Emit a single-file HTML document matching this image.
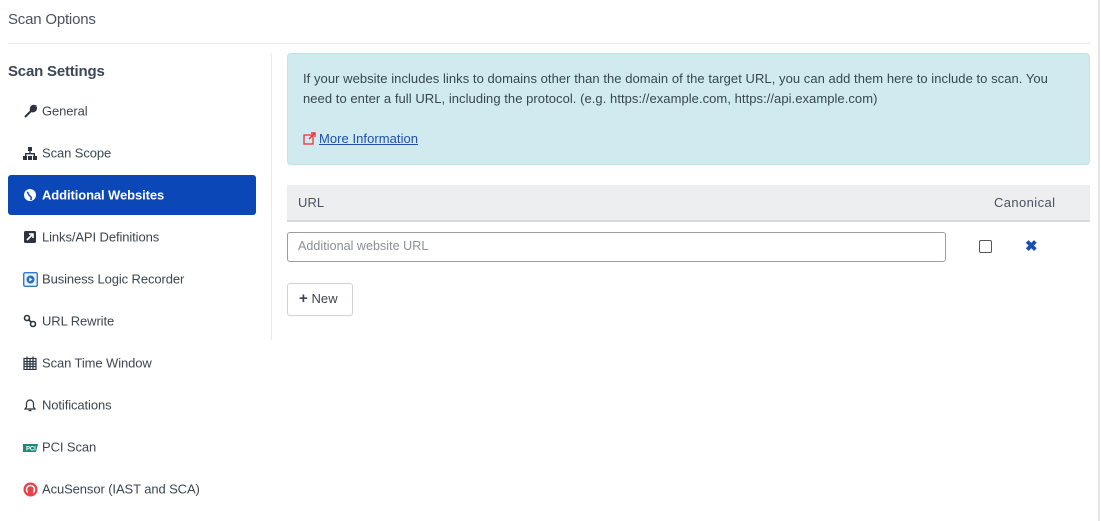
<!DOCTYPE html>
<html><head><meta charset="utf-8"><style>
body{margin:0;width:1101px;height:521px;background:#fff;font-family:"Liberation Sans",sans-serif;color:#3d4650;position:relative;overflow:hidden}
.abs{position:absolute}
.t{font-size:13px;letter-spacing:0.05px;white-space:nowrap}
.nav{position:absolute;left:8px;width:248px;height:40px;font-size:13px;letter-spacing:-0.1px;color:#3d4650}
.nav span{position:absolute;left:34px;top:50%;transform:translateY(-50%)}
.nav svg{position:absolute;left:15px;top:13px}
</style></head><body>
<div class="abs" style="left:1098px;top:0;width:2px;height:521px;background:#e4e6e9"></div>
<div class="abs" style="left:8px;top:11px;font-size:15px;letter-spacing:-0.2px;color:#4a5260">Scan Options</div>
<div class="abs" style="left:8px;top:43px;width:1082px;height:1px;background:#e5e7ea"></div>
<div class="abs" style="left:8px;top:63px;font-size:15px;font-weight:bold;letter-spacing:-0.2px;color:#3e4757">Scan Settings</div>
<div class="abs" style="left:271px;top:53px;width:1px;height:287px;background:#e8e9eb"></div>

<div class="nav" style="top:91px"><svg width="14" height="14" viewBox="0 0 14 14"><path d="M2 13L8 7M8 7C7 4 9 1 12 2L10 4L11 5L13 4C13 7 10 8 8 7" stroke="#2d3440" stroke-width="2" fill="#2d3440"/></svg><span>General</span></div>
<div class="nav" style="top:133px"><svg width="14" height="14" viewBox="0 0 14 14" fill="#2d3440"><rect x="5" y="1" width="4" height="4"/><rect x="6.3" y="5" width="1.4" height="3"/><rect x="2" y="7" width="10" height="1.4"/><rect x="2" y="7" width="1.4" height="3"/><rect x="10.6" y="7" width="1.4" height="3"/><rect x="0" y="10" width="4" height="4"/><rect x="5" y="10" width="4" height="4"/><rect x="10" y="10" width="4" height="4"/></svg><span>Scan Scope</span></div>
<div class="nav" style="top:175px;background:#0c47b8;border-radius:3px"><svg width="14" height="14" viewBox="0 0 14 14"><circle cx="7" cy="7" r="6" fill="#fff"/><path d="M4 4C6 5 5 7 7 8C9 9 8 11 8 12" stroke="#0c47b8" stroke-width="1.5" fill="none"/></svg><span style="color:#fff;font-weight:bold">Additional Websites</span></div>
<div class="nav" style="top:217px"><svg width="14" height="14" viewBox="0 0 14 14"><rect x="1" y="1" width="12" height="12" rx="1.5" fill="#2d3440"/><path d="M4 10L10 4M6 4H10V8" stroke="#fff" stroke-width="1.6" fill="none"/></svg><span>Links/API Definitions</span></div>
<div class="nav" style="top:259px"><svg width="15" height="15" viewBox="0 0 15 15"><rect x="0.7" y="0.7" width="13.6" height="13.6" rx="1.5" fill="#eaf1fa" stroke="#2a7ccf" stroke-width="1.4"/><circle cx="7.5" cy="7.5" r="4" fill="#2a6fb8"/><path d="M6.3 5.5L9.5 7.5L6.3 9.5Z" fill="#fff"/></svg><span>Business Logic Recorder</span></div>
<div class="nav" style="top:301px"><svg width="14" height="14" viewBox="0 0 14 14" fill="none" stroke="#2d3440" stroke-width="1.6"><circle cx="4" cy="4" r="2.5"/><circle cx="10" cy="10" r="2.5"/><path d="M5.5 5.5L8.5 8.5"/></svg><span>URL Rewrite</span></div>
<div class="nav" style="top:343px"><svg width="14" height="14" viewBox="0 0 14 14" fill="none" stroke="#2d3440" stroke-width="1.2"><rect x="1" y="2.5" width="12" height="11"/><path d="M1 5.5H13M1 8H13M1 10.5H13M4 2.5V13.5M7 2.5V13.5M10 2.5V13.5M4 0.5V3M10 0.5V3"/></svg><span>Scan Time Window</span></div>
<div class="nav" style="top:385px"><svg width="14" height="14" viewBox="0 0 14 14" fill="none" stroke="#2d3440" stroke-width="1.2"><path d="M2 11H12L10.5 9V5.5A3.5 3.5 0 0 0 3.5 5.5V9Z M5.5 12.5H8.5"/></svg><span>Notifications</span></div>
<div class="nav" style="top:427px"><svg width="15" height="12" viewBox="0 0 15 12" style="top:15px"><path d="M0 2H15L13 10H0Z" fill="#1b8a7a"/><text x="3" y="8.5" font-size="6" fill="#fff" font-family="Liberation Sans" font-weight="bold">PCI</text></svg><span>PCI Scan</span></div>
<div class="nav" style="top:469px"><svg width="15" height="15" viewBox="0 0 15 15"><circle cx="7.5" cy="7.5" r="7" fill="#e8414c"/><circle cx="7.5" cy="7.5" r="4" fill="none" stroke="#fff" stroke-width="1.5"/><rect x="5" y="8" width="5" height="5" fill="#e8414c"/></svg><span>AcuSensor (IAST and SCA)</span></div>

<div class="abs" style="left:287px;top:53px;width:801px;height:110px;background:#d1eaef;border:1px solid #bee3ea;border-radius:4px"></div>
<div class="abs t" style="left:303px;top:71px;color:#37474f">If your website includes links to domains other than the domain of the target URL, you can add them here to include to scan. You</div>
<div class="abs t" style="left:303px;top:91px;color:#37474f">need to enter a full URL, including the protocol. (e.g. https://example.com, https://api.example.com)</div>
<div class="abs t" style="left:319px;top:131px;color:#1f4fb0;text-decoration:underline">More Information</div>
<svg class="abs" style="left:303px;top:132px" width="14" height="14" viewBox="0 0 14 14"><rect x="1" y="3" width="9" height="9" fill="#d1eaef" stroke="#e33" stroke-width="1.3"/><path d="M6 7L12 1M8 1H12V5" stroke="#e33" stroke-width="1.4" fill="none"/></svg>

<div class="abs" style="left:287px;top:185px;width:803px;height:35px;background:#edeef0;border-bottom:2px solid #d9dadc"></div>
<div class="abs t" style="left:298px;top:195px;color:#4a5260">URL</div>
<div class="abs t" style="left:994px;top:195px;color:#4a5260;letter-spacing:0.4px">Canonical</div>
<div class="abs" style="left:287px;top:232px;width:657px;height:28px;border:1px solid #9a9ea3;border-radius:3px"></div>
<div class="abs t" style="left:298px;top:239px;color:#8a8f96;font-size:12.5px">Additional website URL</div>
<div class="abs" style="left:979px;top:240px;width:11px;height:11px;border:1px solid #555;border-radius:2px"></div>
<div class="abs" style="left:1025px;top:237px;font-size:15px;font-weight:bold;color:#1c4fb5">&#x2716;</div>
<div class="abs" style="left:287px;top:283px;width:64px;height:31px;border:1px solid #cfd2d6;border-radius:3px"></div>
<div class="abs t" style="left:299px;top:291px;color:#3d4650"><b style="font-size:15px;line-height:13px">+</b> New</div>
</body></html>
